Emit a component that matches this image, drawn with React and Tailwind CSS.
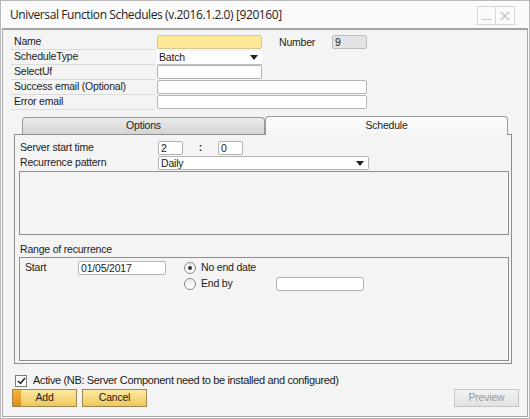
import React from "react";

function Field({ className = "", bg = "bg-white", children }) {
  return (
    <div
      className={
        "h-[14px] border rounded-[2px] px-[2px] flex items-center text-[10.5px] leading-none " +
        bg +
        " " +
        className
      }
    >
      {children}
    </div>
  );
}

function Caret() {
  return (
    <svg width="8" height="5" viewBox="0 0 8 5" className="ml-auto mr-[2px]">
      <path d="M0 0 L8 0 L4 5 Z" fill="#222" />
    </svg>
  );
}

function Label({ children }) {
  return (
    <div className="h-full flex items-center pl-[3px] border-b border-[#dadada]">
      {children}
    </div>
  );
}

function Radio({ checked }) {
  return (
    <div className="w-[12px] h-[12px] rounded-full border border-[#8a8a8a] bg-gradient-to-b from-[#ececec] to-white flex items-center justify-center">
      {checked && <div className="w-[4px] h-[4px] rounded-full bg-[#333]" />}
    </div>
  );
}

export default function App() {
  return (
    <div className="w-[530px] h-[419px] bg-white font-['Liberation_Sans',Arial,sans-serif] text-[10.5px] text-[#1b1b1b] tracking-[-0.2px]">
      <div className="w-full h-full border border-[#b8b8b8] bg-[#fafafa] flex flex-col px-[1px] pb-[1px]">
        {/* title bar */}
        <div className="h-[27px] flex items-center pl-[8px] pr-[13px] shrink-0">
          <div className="text-[12px] tracking-[-0.4px] text-[#222] font-['Open_Sans',sans-serif] leading-none mt-[1px]">
            Universal Function Schedules (v.2016.1.2.0) [920160]
          </div>
          <div className="ml-auto flex mt-[2px]">
            <div className="w-[19px] h-[19px] border border-[#d6d6d6] flex items-end justify-center pb-[4px]">
              <div className="w-[9px] h-[1px] bg-[#c8c8c8]" />
            </div>
            <div className="w-[19px] h-[19px] border border-l-0 border-[#d6d6d6] flex items-center justify-center">
              <svg width="10" height="10" viewBox="0 0 10 10">
                <path d="M1 1 L9 9 M9 1 L1 9" stroke="#c4c4c4" strokeWidth="1.6" />
              </svg>
            </div>
          </div>
        </div>
        {/* body */}
        <div className="flex-1 flex flex-col border-t-[2px] border-t-[#a3a3a3] border-x border-b border-[#a9a9a9] bg-[#f4f4f4] pl-[8px] pr-[8px] pt-[5px]">
          {/* form rows */}
          <div className="flex h-[15px]">
            <div className="w-[144px]"><Label>Name</Label></div>
            <Field bg="bg-[#fde897]" className="ml-[2px] w-[105px] border-[#d6c98f]" />
            <div className="ml-[17px] w-[53px] flex items-center">Number</div>
            <Field bg="bg-[#e3e3e3]" className="w-[35px] border-[#bdbdbd]">9</Field>
          </div>
          <div className="flex h-[15px]">
            <div className="w-[144px]"><Label>ScheduleType</Label></div>
            <Field className="ml-[2px] w-[105px] mt-[1px] border-x-0 border-t-0 rounded-none border-b-[#c0c0c0]">
              Batch
              <Caret />
            </Field>
          </div>
          <div className="flex h-[15px]">
            <div className="w-[144px]"><Label>SelectUf</Label></div>
            <Field className="ml-[2px] w-[105px] border-[#b4b4b4]" />
          </div>
          <div className="flex h-[15px]">
            <div className="w-[144px]"><Label>Success email (Optional)</Label></div>
            <Field className="ml-[2px] w-[210px] border-[#b4b4b4]" />
          </div>
          <div className="flex h-[15px]">
            <div className="w-[144px]"><Label>Error email</Label></div>
            <Field className="ml-[2px] w-[210px] border-[#b4b4b4]" />
          </div>

          {/* tabs */}
          <div className="ml-[3px] w-[498px] mt-[6px]">
            <div className="flex items-end h-[18px]">
              <div className="ml-[8px] w-[243px] h-[17px] border border-b-0 border-[#9a9a9a] rounded-t-[4px] bg-gradient-to-b from-[#ececec] to-[#d3d3d3] flex items-center justify-center">
                Options
              </div>
              <div className="w-[243px] h-[19px] border border-b-0 border-[#9a9a9a] rounded-t-[4px] bg-gradient-to-b from-[#fdfdfd] to-[#f4f4f4] flex items-center justify-center relative z-10 -mb-px">
                Schedule
              </div>
            </div>
            <div className="h-[230px] border border-[#8e8e8e] bg-[#f4f4f4] pl-[4px] pr-[3px] pt-[6px] flex flex-col">
              <div className="flex h-[14px] items-center">
                <div className="w-[139px] pl-[1px]">Server start time</div>
                <Field className="w-[25px] border-[#b4b4b4]">2</Field>
                <div className="w-[35px] text-center font-bold">:</div>
                <Field className="w-[25px] border-[#b4b4b4]">0</Field>
              </div>
              <div className="flex h-[14px] items-center mt-[1px]">
                <div className="w-[139px] pl-[1px]">Recurrence pattern</div>
                <Field className="w-[211px] border-[#b4b4b4]">
                  Daily
                  <Caret />
                </Field>
              </div>
              <div className="mt-[1px] w-[490px] h-[64px] border border-[#8e8e8e]" />
              <div className="mt-[8px] h-[14px] flex items-center pl-[1px]">Range of recurrence</div>
              <div className="w-[490px] h-[104px] border border-[#8e8e8e] pl-[5px] pt-[3px] flex">
                <div className="w-[53px] h-[14px] flex items-center">Start</div>
                <Field className="w-[88px] border-[#b4b4b4]">01/05/2017</Field>
                <div className="ml-[18px] flex flex-col">
                  <div className="h-[14px] flex items-center">
                    <Radio checked />
                    <span className="ml-[5px]">No end date</span>
                  </div>
                  <div className="h-[15px] flex items-center mt-[1px]">
                    <Radio />
                    <span className="ml-[5px] w-[75px]">End by</span>
                    <Field className="w-[88px] border-[#b4b4b4]" />
                  </div>
                </div>
              </div>
            </div>
          </div>

          {/* active */}
          <div className="mt-[10px] h-[13px] flex items-center ml-[4px]">
            <div className="w-[12px] h-[12px] border border-[#7a7a7a] bg-white flex items-center justify-center">
              <svg width="9" height="8" viewBox="0 0 9 8">
                <path d="M1 4 L3.5 6.5 L8 1" stroke="#222" strokeWidth="1.5" fill="none" />
              </svg>
            </div>
            <span className="ml-[6px] text-[11px] tracking-[-0.35px]">
              Active (NB: Server Component need to be installed and configured)
            </span>
          </div>

          {/* buttons */}
          <div className="mt-[2px] flex h-[18px]">
            <div className="ml-[1px] w-[65px] h-[18px] border border-[#9b8750] flex bg-gradient-to-b from-[#fbe9a0] to-[#efc85a]">
              <div className="w-[8px] h-full bg-gradient-to-b from-[#f6b43c] to-[#e48a14]" />
              <div className="flex-1 flex items-center justify-center pr-[8px]">Add</div>
            </div>
            <div className="ml-[5px] w-[65px] h-[18px] border border-[#9b8750] flex items-center justify-center bg-gradient-to-b from-[#fbe9a0] to-[#efc85a]">
              Cancel
            </div>
            <div className="ml-auto w-[65px] h-[18px] border border-[#c4c4c4] flex items-center justify-center bg-gradient-to-b from-[#f2f2f2] to-[#e2e2e2] text-[#9a9a9a]">
              Preview
            </div>
          </div>
        </div>
      </div>
    </div>
  );
}
